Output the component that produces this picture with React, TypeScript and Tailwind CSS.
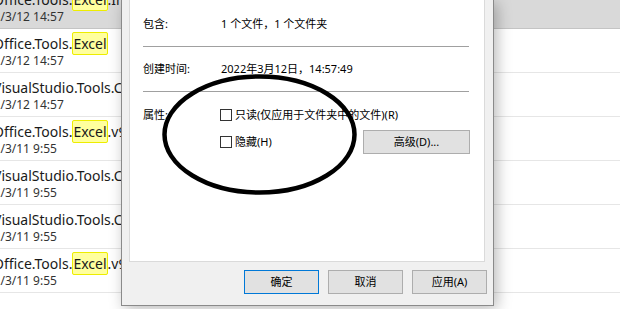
import React from 'react';

const rows = [
  { title: 'Office.Tools.', hl: 'Excel', rest: '.Interop.dll', date: '2022/3/12 14:57' },
  { title: 'Office.Tools.', hl: 'Excel', rest: '', date: '2022/3/12 14:57' },
  { title: 'VisualStudio.Tools.Common', hl: '', rest: '', date: '2022/3/12 14:57' },
  { title: 'Office.Tools.', hl: 'Excel', rest: '.v9.0.dll', date: '2022/3/11 9:55' },
  { title: 'VisualStudio.Tools.Common', hl: '', rest: '', date: '2022/3/11 9:55' },
  { title: 'VisualStudio.Tools.Common', hl: '', rest: '', date: '2022/3/11 9:55' },
  { title: 'Office.Tools.', hl: 'Excel', rest: '.v9.0.dll', date: '2022/3/11 9:55' },
  { title: '', hl: '', rest: '', date: '' },
];

function Checkbox({ label }: { label: string }) {
  return (
    <div className="flex items-center gap-[3px]">
      <span className="w-[12px] h-[12px] border border-[#333] bg-white" />
      <span>{label}</span>
    </div>
  );
}

function Button({ children, primary }: { children: React.ReactNode; primary?: boolean }) {
  return (
    <button
      className={`h-[24px] w-[75px] bg-[#e1e1e1] border text-[11px] text-black ${
        primary ? 'border-[#0078d7]' : 'border-[#adadad]'
      }`}
    >
      {children}
    </button>
  );
}

export default function App() {
  return (
    <div className="relative w-[620px] h-[309px] overflow-hidden bg-white font-['Noto_Sans','Noto_Sans_CJK_SC',sans-serif] text-black">
      {/* file list behind the dialog */}
      <div className="flex flex-col mt-[-15px]">
        {rows.map((r, i) => (
          <div
            key={i}
            className={`h-[44px] shrink-0 border-b pt-[5px] whitespace-nowrap ${
              i === 0 ? 'bg-[#d9d9d9] border-[#c4c4c4]' : 'border-[#e6e6e6]'
            }`}
          >
            <div className="h-[20px] leading-[20px] text-[14px] ml-[-7px] text-[#1a1a1a]">
              {r.title}
              {r.hl && (
                <span className="bg-[#ffff9e] border border-[#eded00] rounded-[2px] py-[1px]">
                  {r.hl}
                </span>
              )}
              {r.rest}
            </div>
            <div className="leading-[14px] text-[12px] ml-[-27px] text-[#333]">{r.date}</div>
          </div>
        ))}
      </div>

      {/* properties dialog */}
      <div className="absolute left-[121px] top-0 w-[373px] h-[306px] bg-[#f0f0f0] border-x border-b border-[#8a8a8a] shadow-[3px_3px_14px_rgba(0,0,0,0.28)] flex flex-col text-[11px]">
        <div className="ml-[7px] mr-[8px] h-[262px] bg-white border-x border-b border-[#dadada] pl-[13px] pr-[14px] flex flex-col">
          <div className="h-[46px] pt-[17px] flex leading-[14px]">
            <span className="w-[78px]">包含:</span>
            <span>1 个文件，1 个文件夹</span>
          </div>
          <div className="h-px bg-[#a0a0a0] mr-[1px]" />
          <div className="h-[44px] pt-[15px] flex leading-[14px]">
            <span className="w-[78px]">创建时间:</span>
            <span>2022年3月12日，14:57:49</span>
          </div>
          <div className="h-px bg-[#a0a0a0] mr-[1px]" />
          <div className="pt-[16px] flex leading-[14px]">
            <span className="w-[77px]">属性:</span>
            <div className="flex-1 flex flex-col">
              <Checkbox label="只读(仅应用于文件夹中的文件)(R)" />
              <div className="flex items-center justify-between mt-[8px]">
                <Checkbox label="隐藏(H)" />
                <button className="w-[107px] h-[24px] bg-[#e1e1e1] border border-[#adadad] text-[11px]">
                  高级(D)...
                </button>
              </div>
            </div>
          </div>
        </div>
        <div className="flex justify-end gap-[9px] mt-[8px] pr-[6px]">
          <Button primary>确定</Button>
          <Button>取消</Button>
          <Button>应用(A)</Button>
        </div>
      </div>

      {/* hand-drawn circle over the attributes */}
      <svg className="absolute inset-0 pointer-events-none" width="620" height="309">
        <ellipse cx="259.5" cy="134.5" rx="95" ry="58" fill="none" stroke="#000" strokeWidth="4.5" />
      </svg>
    </div>
  );
}
